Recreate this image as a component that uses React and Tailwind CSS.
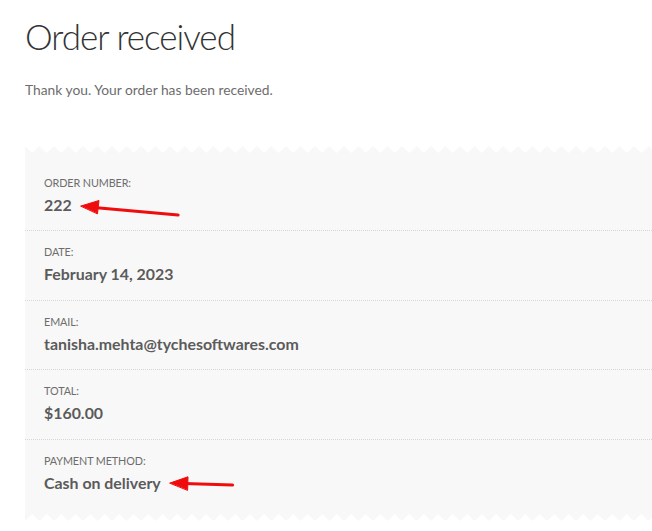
const rows = [
  { label: 'Order number:', value: '222' },
  { label: 'Date:', value: 'February 14, 2023' },
  { label: 'Email:', value: 'tanisha.mehta@tychesoftwares.com' },
  { label: 'Total:', value: '$160.00' },
  { label: 'Payment method:', value: 'Cash on delivery' },
];

function Zigzag({ flip }) {
  const id = flip ? 'zz-bottom' : 'zz-top';
  return (
    <svg className="block h-[7px] w-full" preserveAspectRatio="none">
      <defs>
        <pattern id={id} width="14.5" height="7" patternUnits="userSpaceOnUse">
          <polygon
            points={flip ? '0,7 7.25,0 14.5,7 14.5,0 0,0' : '0,0 7.25,7 14.5,0 14.5,7 0,7'}
            fill="#f8f8f8"
          />
        </pattern>
      </defs>
      <rect width="100%" height="7" fill={`url(#${id})`} />
    </svg>
  );
}

function Arrows() {
  return (
    <svg className="pointer-events-none absolute inset-0 h-full w-full">
      <g fill="#f00c0c" stroke="#f00c0c" strokeLinecap="round">
        <line x1="178" y1="215" x2="94" y2="207.5" strokeWidth="3.2" />
        <polygon points="81,206 99,200.5 97.5,213.5" strokeWidth="1" strokeLinejoin="round" />
        <line x1="232.5" y1="485" x2="184" y2="483.5" strokeWidth="3.2" />
        <polygon points="170,483 188,476.8 187.6,490" strokeWidth="1" strokeLinejoin="round" />
      </g>
    </svg>
  );
}

export default function App() {
  return (
    <div className="relative min-h-[531px] overflow-hidden bg-white pl-[25px] font-['Lato','Open_Sans',sans-serif] text-[#6d6d6d]">
      <h1 className="pt-[13px] text-[35px] font-light leading-[46px] tracking-[-1px] text-[#333333]">Order received</h1>
      <p className="mt-[21px] text-[13.8px] leading-[20px]">Thank you. Your order has been received.</p>

      <div className="mt-[46px]">
        <Zigzag />
        <div className="bg-[#f8f8f8] pb-[5px] pt-[8.5px]">
          {rows.map((row, i) => (
            <div
              key={row.label}
              className={`h-[69.5px] px-[19px] pt-[13px] ${i < rows.length - 1 ? 'border-b border-dotted border-[#d6d6d6]' : ''}`}
            >
              <p className="text-[10.8px] uppercase leading-[16px] tracking-[-0.1px] text-[#6d6d6d]">{row.label}</p>
              <p className="mt-[2px] text-[15.9px] font-bold leading-[24px] text-[#5b5b5b]">{row.value}</p>
            </div>
          ))}
        </div>
        <Zigzag flip />
      </div>

      <Arrows />
    </div>
  );
}
